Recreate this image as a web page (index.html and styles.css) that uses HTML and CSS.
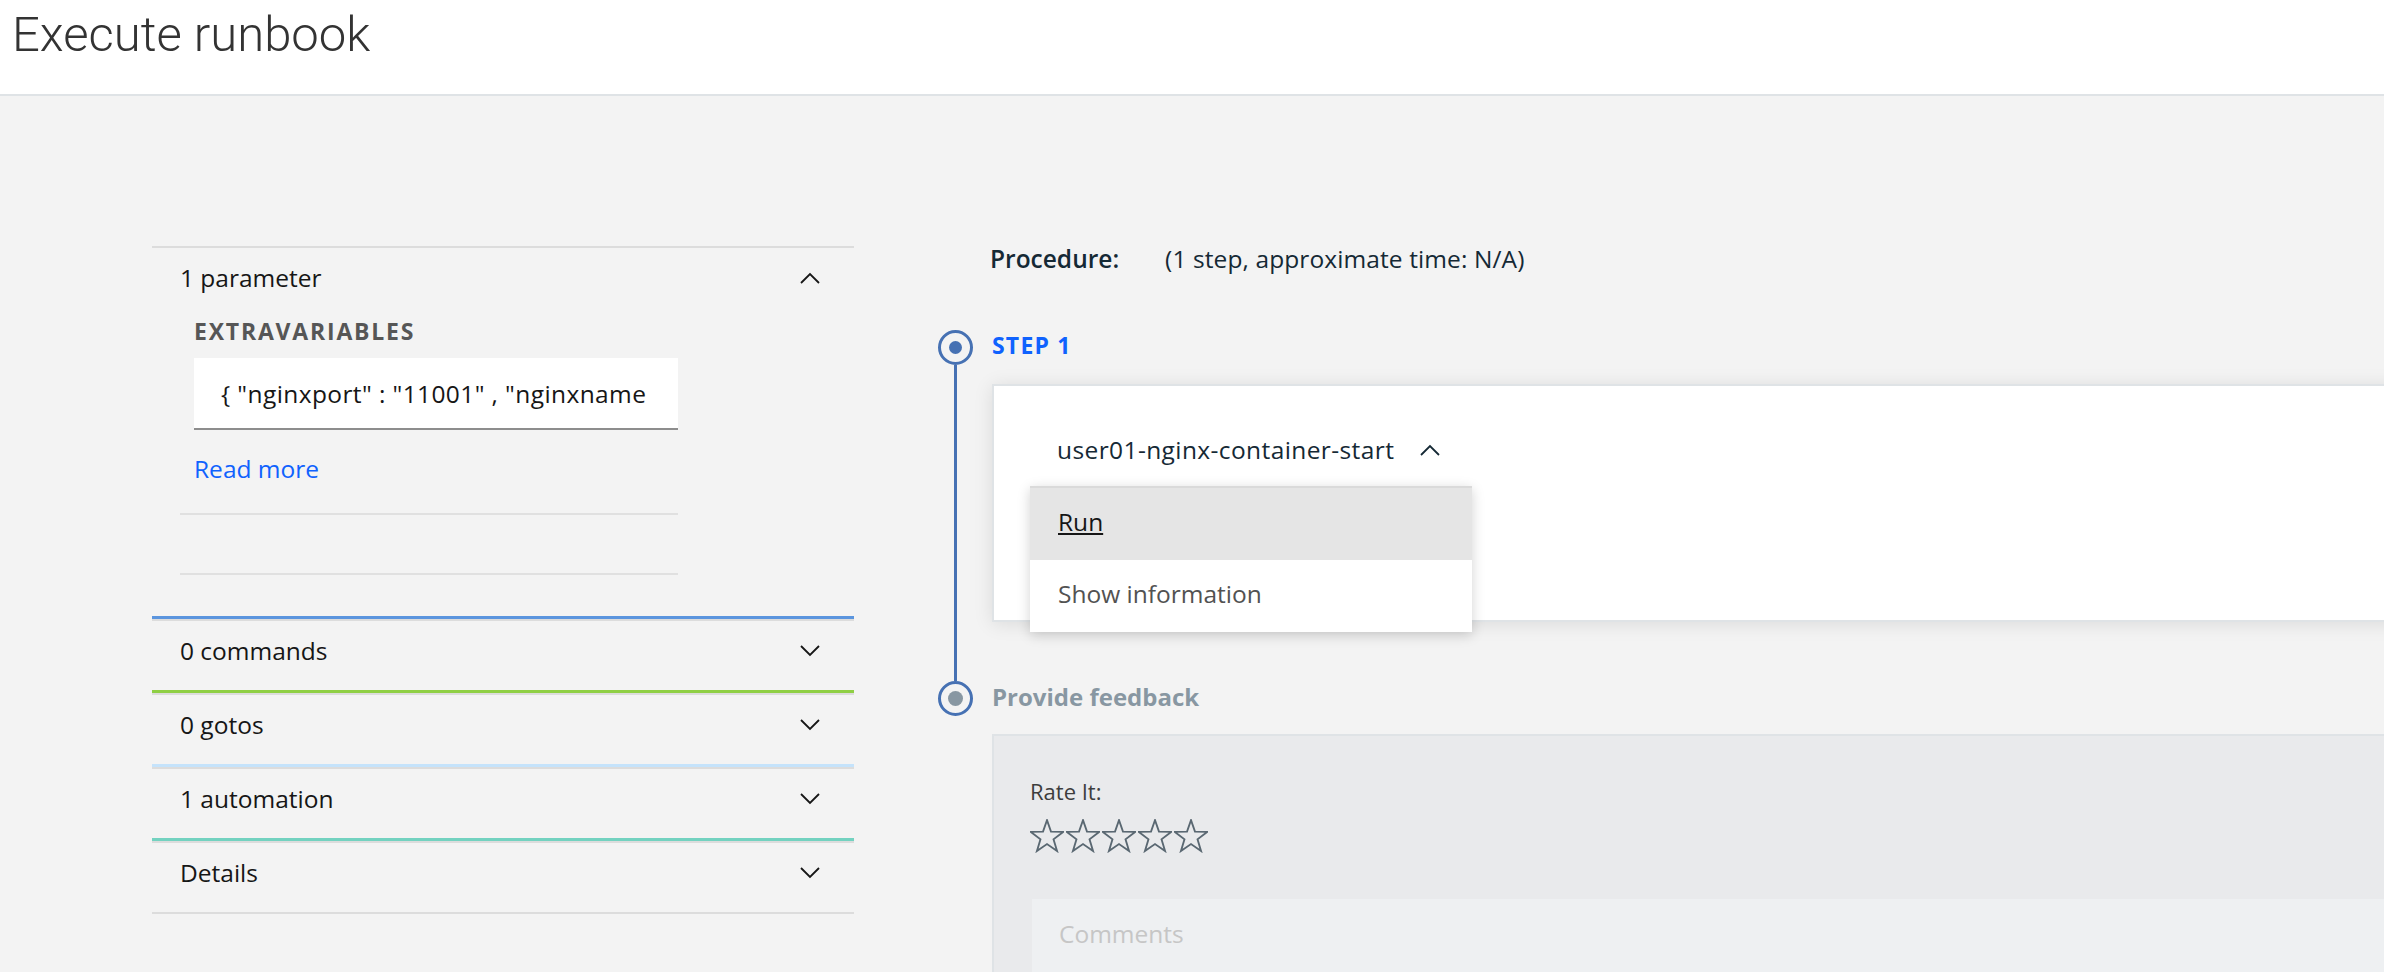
FILE: index.html
```html
<!DOCTYPE html>
<html lang="en">
<head>
<meta charset="utf-8">
<title>Execute runbook</title>
<link rel="stylesheet" href="styles.css">
</head>
<body>
<header class="page-header">
  <h1 class="page-title">Execute runbook</h1>
</header>
<main class="layout">
  <aside class="sidebar">
    <section class="acc">
      <div class="acc-head">
        <span>1 parameter</span>
        <svg class="chev" viewBox="0 0 20 12" width="20" height="12"><polyline points="1,11 10,2 19,11" fill="none" stroke="#161616" stroke-width="1.8"/></svg>
      </div>
      <div class="acc-body">
        <div class="param">
          <div class="param-label">EXTRAVARIABLES</div>
          <div class="param-field">
            <input class="param-input" type="text" readonly value='{ "nginxport" : "11001" , "nginxname" : "user01-nginx" }'>
          </div>
          <a class="read-more" href="#">Read more</a>
        </div>
        <div class="param param--empty"></div>
      </div>
    </section>
    <section class="acc acc--blue">
      <div class="acc-head">
        <span>0 commands</span>
        <svg class="chev" viewBox="0 0 20 12" width="20" height="12"><polyline points="1,1 10,10 19,1" fill="none" stroke="#161616" stroke-width="1.8"/></svg>
      </div>
    </section>
    <section class="acc acc--green">
      <div class="acc-head">
        <span>0 gotos</span>
        <svg class="chev" viewBox="0 0 20 12" width="20" height="12"><polyline points="1,1 10,10 19,1" fill="none" stroke="#161616" stroke-width="1.8"/></svg>
      </div>
    </section>
    <section class="acc acc--sky">
      <div class="acc-head">
        <span>1 automation</span>
        <svg class="chev" viewBox="0 0 20 12" width="20" height="12"><polyline points="1,1 10,10 19,1" fill="none" stroke="#161616" stroke-width="1.8"/></svg>
      </div>
    </section>
    <section class="acc acc--teal">
      <div class="acc-head">
        <span>Details</span>
        <svg class="chev" viewBox="0 0 20 12" width="20" height="12"><polyline points="1,1 10,10 19,1" fill="none" stroke="#161616" stroke-width="1.8"/></svg>
      </div>
    </section>
  </aside>

  <section class="procedure">
    <div class="proc-summary">
      <span class="proc-label">Procedure:</span>
      <span class="proc-meta">(1 step, approximate time: N/A)</span>
    </div>
    <ol class="steps">
      <li class="step">
        <span class="step-marker"><span class="step-dot"></span></span>
        <span class="step-title">STEP 1</span>
        <span class="step-rail"></span>
        <div class="step-body">
          <div class="card">
            <div class="automation">
              <button class="automation-toggle" type="button">user01-nginx-container-start
                <svg viewBox="0 0 20 12" width="20" height="12"><polyline points="1,11 10,2 19,11" fill="none" stroke="#152935" stroke-width="1.8"/></svg>
              </button>
              <ul class="menu">
                <li class="menu-item menu-item--active">Run</li>
                <li class="menu-item">Show information</li>
              </ul>
            </div>
          </div>
        </div>
      </li>
      <li class="step step--feedback">
        <span class="step-marker"><span class="step-dot"></span></span>
        <span class="step-title">Provide feedback</span>
        <div class="step-body">
          <div class="feedback">
            <div class="rate-label">Rate It:</div>
            <div class="stars">
              <svg class="star" viewBox="0 0 24 24"><polygon points="12,0.8 14.8,8.9 23.4,9.1 16.6,14.3 19.1,22.6 12,17.7 4.9,22.6 7.4,14.3 0.6,9.1 9.2,8.9"/></svg>
              <svg class="star" viewBox="0 0 24 24"><polygon points="12,0.8 14.8,8.9 23.4,9.1 16.6,14.3 19.1,22.6 12,17.7 4.9,22.6 7.4,14.3 0.6,9.1 9.2,8.9"/></svg>
              <svg class="star" viewBox="0 0 24 24"><polygon points="12,0.8 14.8,8.9 23.4,9.1 16.6,14.3 19.1,22.6 12,17.7 4.9,22.6 7.4,14.3 0.6,9.1 9.2,8.9"/></svg>
              <svg class="star" viewBox="0 0 24 24"><polygon points="12,0.8 14.8,8.9 23.4,9.1 16.6,14.3 19.1,22.6 12,17.7 4.9,22.6 7.4,14.3 0.6,9.1 9.2,8.9"/></svg>
              <svg class="star" viewBox="0 0 24 24"><polygon points="12,0.8 14.8,8.9 23.4,9.1 16.6,14.3 19.1,22.6 12,17.7 4.9,22.6 7.4,14.3 0.6,9.1 9.2,8.9"/></svg>
            </div>
            <textarea class="comments" placeholder="Comments"></textarea>
          </div>
        </div>
      </li>
    </ol>
  </section>
</main>
</body>
</html>
```
FILE: styles.css
```css
* { box-sizing: border-box; }

html, body {
  margin: 0;
  padding: 0;
  overflow: hidden;
}

body {
  background: #f3f3f3;
  font-family: "Open Sans", "Noto Sans", sans-serif;
  font-size: 24.5px;
  line-height: 32px;
  color: #161616;
}

/* Header */
.page-header {
  height: 96px;
  background: #ffffff;
  border-bottom: 2px solid #dfe3e6;
  padding: 5px 0 0 12px;
}

.page-title {
  margin: 0;
  font-family: Roboto, "Liberation Sans", sans-serif;
  font-weight: 300;
  font-size: 49px;
  line-height: 60px;
  color: #333333;
}

/* Layout */
.layout {
  display: flex;
  align-items: flex-start;
  padding: 147px 0 0 152px;
}

.sidebar {
  flex: 0 0 702px;
  margin-top: 3px;
}

.procedure {
  flex: 1;
  min-width: 0;
  margin-left: 84px;
  margin-right: -80px;
}

/* Accordion */
.acc--blue { border-top: 3px solid #5b95de; }
.acc--green { border-top: 3px solid #8fcf44; }
.acc--sky { border-top: 3px solid #c5e3fb; }
.acc--teal { border-top: 3px solid #73d2c0; }
.acc:last-child { border-bottom: 2px solid #dcdcdc; }

.acc-head {
  display: flex;
  align-items: center;
  justify-content: space-between;
  height: 71px;
  padding: 0 34px 10px 28px;
  border-top: 2px solid #dcdcdc;
}

.chev { display: block; }

.acc-body {
  padding: 0 176px 41px 28px;
}

.param {
  padding: 0 0 28px 14px;
  border-bottom: 2px solid #e0e0e0;
}

.param--empty {
  height: 60px;
  padding: 0;
}

.param-label {
  font-weight: 700;
  font-size: 23px;
  line-height: 28px;
  letter-spacing: 1.8px;
  color: #565656;
}

.param-field {
  width: 484px;
  height: 72px;
  margin-top: 13px;
  padding: 0 31px 0 0;
  background: #ffffff;
  border-bottom: 2px solid #8d8d8d;
}

.param-input {
  display: block;
  width: 100%;
  height: 70px;
  padding: 0 0 0 27px;
  border: 0;
  background: transparent;
  font: inherit;
  letter-spacing: 0.4px;
  color: #161616;
  outline: none;
}

.read-more {
  display: block;
  margin-top: 23px;
  color: #0f62fe;
  text-decoration: none;
}

/* Procedure */
.proc-summary {
  display: flex;
  gap: 46px;
  padding-left: 52px;
  color: #152935;
}

.proc-label { font-weight: 600; }

.proc-meta { letter-spacing: 0.1px; }

.steps {
  list-style: none;
  margin: 55px 0 0;
  padding: 0;
}

.step {
  display: grid;
  grid-template-columns: 54px 1fr;
}

.step-marker {
  grid-column: 1;
  width: 35px;
  height: 35px;
  border: 3px solid #4671b3;
  border-radius: 50%;
  display: flex;
  align-items: center;
  justify-content: center;
}

.step-dot {
  width: 13px;
  height: 13px;
  border-radius: 50%;
  background: #4671b3;
}

.step-title {
  grid-column: 2;
  align-self: start;
  font-weight: 700;
  font-size: 23px;
  line-height: 31px;
  padding-bottom: 4px;
  letter-spacing: 1.2px;
  color: #0f62fe;
}

.step-rail {
  grid-column: 1;
  width: 3px;
  margin-left: 16px;
  background: #4671b3;
}

.step-body {
  grid-column: 2;
  padding: 19px 0 59px;
}

.card {
  min-height: 238px;
  background: #ffffff;
  border: 2px solid #dfe3e6;
  border-right: 0;
  box-shadow: 0 2px 18px rgba(0, 0, 0, 0.1);
  padding: 48px 0 0 63px;
}

.automation {
  position: relative;
  display: inline-block;
}

.automation-toggle {
  display: flex;
  align-items: center;
  gap: 26px;
  padding: 0;
  border: 0;
  background: none;
  font: inherit;
  letter-spacing: 0.4px;
  color: #152935;
}

.menu {
  position: absolute;
  left: -27px;
  top: 52px;
  width: 442px;
  margin: 0;
  padding: 0;
  list-style: none;
  background: #ffffff;
  border-top: 2px solid #dadada;
  box-shadow: 0 3px 12px rgba(0, 0, 0, 0.18);
  z-index: 2;
}

.menu-item {
  height: 72px;
  line-height: 68px;
  padding: 0 0 4px 28px;
  color: #525252;
}

.menu-item--active {
  background: #e5e5e5;
  color: #161616;
  text-decoration: underline;
}

/* Feedback */
.step--feedback .step-title {
  font-size: 24px;
  letter-spacing: 0;
  color: #8897a2;
}

.step--feedback .step-dot {
  width: 15px;
  height: 15px;
  background: #8897a2;
}

.step--feedback .step-body {
  padding: 18px 0 0;
}

.feedback {
  min-height: 320px;
  background: #e9eaec;
  border-top: 2px solid #dfe3e6;
  border-left: 2px solid #dfe3e6;
  padding: 40px 0 0 36px;
}

.rate-label {
  font-size: 22px;
  line-height: 30px;
  color: #3d3d3d;
}

.stars {
  display: flex;
  gap: 2px;
  margin-top: 13px;
}

.star {
  width: 34px;
  height: 34px;
  fill: none;
  stroke: #5a6872;
  stroke-width: 1.3;
}

.comments {
  display: block;
  width: 100%;
  height: 200px;
  margin: 46px 0 0 2px;
  padding: 19px 27px;
  border: 0;
  background: #eef0f2;
  font: inherit;
  color: #161616;
  resize: none;
  outline: none;
}

.comments::placeholder { color: #c6c6c6; }
```
